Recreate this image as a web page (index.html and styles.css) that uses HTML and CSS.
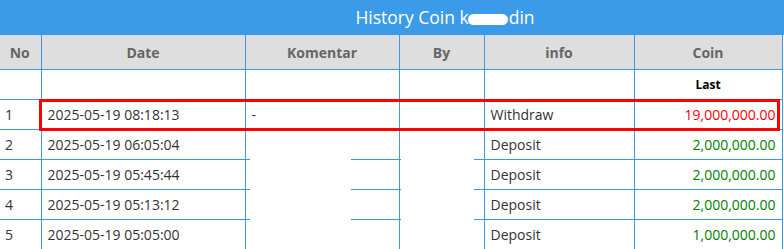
FILE: index.html
```html
<!DOCTYPE html>
<html>
<head>
<meta charset="utf-8">
<link rel="stylesheet" href="styles.css">
</head>
<body>
<div class="panel">
  <div class="title">History Coin k<span class="blot"></span>din</div>
  <table class="grid">
    <colgroup>
      <col class="c-no"><col class="c-date"><col class="c-kom"><col class="c-by"><col class="c-info"><col class="c-coin">
    </colgroup>
    <thead>
      <tr class="head">
        <th>No</th><th>Date</th><th>Komentar</th><th>By</th><th>info</th><th>Coin</th>
      </tr>
    </thead>
    <tbody>
      <tr class="row">
        <td></td><td></td><td></td><td></td><td></td><td class="last">Last</td>
      </tr>
      <tr class="row">
        <td>1</td><td>2025-05-19 08:18:13</td><td>-</td><td></td><td>Withdraw</td><td class="amt out">19,000,000.00</td>
      </tr>
      <tr class="row">
        <td>2</td><td>2025-05-19 06:05:04</td><td></td><td></td><td>Deposit</td><td class="amt in">2,000,000.00</td>
      </tr>
      <tr class="row">
        <td>3</td><td>2025-05-19 05:45:44</td><td></td><td></td><td>Deposit</td><td class="amt in">2,000,000.00</td>
      </tr>
      <tr class="row">
        <td>4</td><td>2025-05-19 05:13:12</td><td></td><td></td><td>Deposit</td><td class="amt in">2,000,000.00</td>
      </tr>
      <tr class="row">
        <td>5</td><td>2025-05-19 05:05:00</td><td></td><td></td><td>Deposit</td><td class="amt in">1,000,000.00</td>
      </tr>
    </tbody>
  </table>
  <div class="redact redact-a"></div>
  <div class="redact redact-b"></div>
  <div class="highlight"></div>
</div>
</body>
</html>
```

FILE: styles.css
```css
html, body {
  margin: 0;
  padding: 0;
  background: #ffffff;
}
body {
  font-family: "Open Sans", "Noto Sans", sans-serif;
  overflow: hidden;
}
.panel {
  position: relative;
  width: 784px;
}
.title {
  height: 35px;
  line-height: 35px;
  background: #3c9be8;
  color: #ffffff;
  font-size: 17.5px;
  text-align: center;
  padding-left: 106px;
  box-sizing: border-box;
}
.blot {
  display: inline-block;
  width: 40px;
  height: 11px;
  background: #ffffff;
  border-radius: 6px;
  vertical-align: -1px;
  margin-left: -1px;
  margin-right: 1px;
}
.grid {
  border-collapse: collapse;
  table-layout: fixed;
  width: 782px;
}
.c-no { width: 41px; }
.c-date { width: 204px; }
.c-kom { width: 154px; }
.c-by { width: 85px; }
.c-info { width: 150px; }
.c-coin { width: 148px; }
.grid th, .grid td {
  border: 1px solid #3a9ae8;
  padding: 0 6px;
  white-space: nowrap;
  overflow: hidden;
}
.grid tr > :first-child {
  border-left: none;
  padding-left: 5px;
}
.head th {
  border-top: none;
  height: 34px;
  background: #dedede;
  color: #666666;
  font-size: 14px;
  font-weight: 700;
  text-align: center;
}
.row td {
  height: 29px;
  color: #333333;
  font-size: 14px;
  text-align: left;
}
.last {
  text-align: center !important;
  font-size: 12px !important;
  font-weight: 700;
  color: #000000 !important;
}
.amt {
  text-align: right !important;
}
.out { color: #ff0000 !important; }
.in { color: #008000 !important; }
.redact {
  position: absolute;
  top: 131px;
  height: 120px;
  background: #ffffff;
}
.redact-a { left: 250px; width: 101px; }
.redact-b { left: 401px; width: 73px; }
.highlight {
  position: absolute;
  left: 39px;
  top: 99px;
  width: 741px;
  height: 32px;
  box-sizing: border-box;
  border: 3px solid #ff0000;
}
```
